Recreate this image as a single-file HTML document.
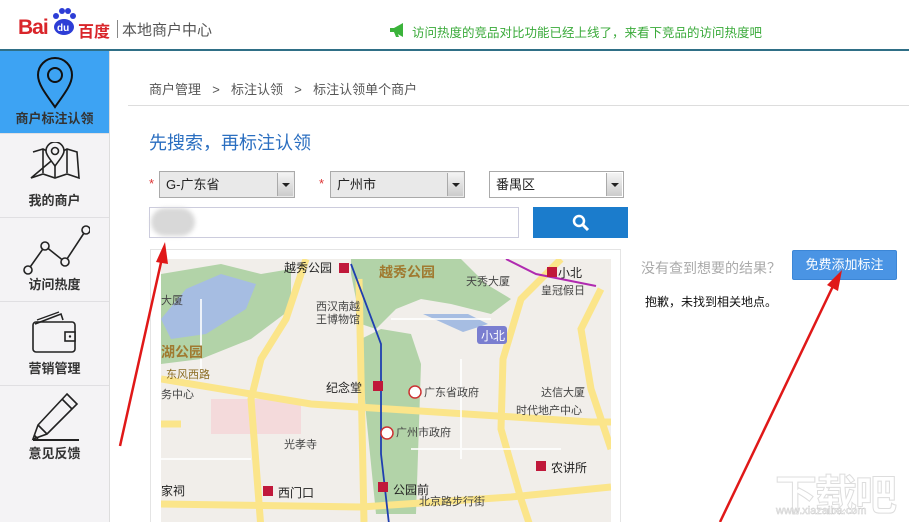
<!DOCTYPE html>
<html><head><meta charset="utf-8"><style>
*{margin:0;padding:0;box-sizing:border-box}
html,body{width:909px;height:522px;overflow:hidden}
body{background:#fff;font-family:"Liberation Sans","Noto Sans CJK SC",sans-serif;position:relative}
.abs{position:absolute}
.side{left:0;top:51px;width:110px;height:471px;background:#f4f3f5;border-right:1px solid #ddd}
.item{position:absolute;left:0;width:109px;height:84px;border-bottom:1px solid #e0dfe2;text-align:center;font-size:13px;font-weight:bold;color:#333}
.item span{position:absolute;left:0;right:0;bottom:8px}
.sel{background:#e9e9e9;border:1px solid #aaa;height:27px;font-size:13px;color:#222;line-height:25px;padding-left:6px}
.sel i{position:absolute;right:1px;top:1px;width:16px;height:23px;background:linear-gradient(#f4f4f4,#ccc);border-left:1px solid #aaa}
.sel i:after{content:"";position:absolute;left:4px;top:10px;border:4px solid transparent;border-top:4px solid #222}
.star{color:#d33;font-size:13px}
</style></head><body>
<!-- header -->
<div class="abs" style="left:18px;top:16px;font-size:21px;font-weight:bold;color:#d9252a;letter-spacing:-1px">Bai</div>
<div class="abs" style="left:52px;top:8px;width:24px;height:30px">
<svg width="24" height="30"><g fill="#2d3dd6"><circle cx="4" cy="8" r="3"/><circle cx="10" cy="3" r="3"/><circle cx="16" cy="3" r="3"/><circle cx="21" cy="8" r="3"/><ellipse cx="12" cy="19" rx="10" ry="8"/></g><text x="5" y="23" fill="#fff" font-size="10" font-weight="bold" font-family="Liberation Sans">du</text></svg></div>
<div class="abs" style="left:78px;top:18px;font-size:16px;font-weight:bold;color:#d9252a">百度</div>
<div class="abs" style="left:117px;top:20px;width:1px;height:18px;background:#888"></div>
<div class="abs" style="left:122px;top:19px;font-size:15px;color:#555">本地商户中心</div>
<svg class="abs" style="left:389px;top:22px" width="18" height="16"><path d="M1 6h4l9-5v14l-9-5H1z" fill="#3bb33b"/><path d="M5 10l2 5h3l-2-5z" fill="#3bb33b"/></svg>
<div class="abs" style="left:412px;top:22px;font-size:12.5px;color:#3aaa3a">访问热度的竞品对比功能已经上线了，来看下竞品的访问热度吧</div>
<div class="abs" style="left:0;top:49px;width:909px;height:2px;background:#2f6f86"></div>
<!-- sidebar -->
<div class="abs side">
<div class="item" style="top:0;height:83px;background:#3da3f3;color:#333"><svg style="margin-top:6px" width="40" height="52" viewBox="0 0 40 52"><path d="M20 50C10 36 3 27 3 18a17 17 0 0 1 34 0c0 9-7 18-17 32z" fill="none" stroke="#111" stroke-width="2"/><circle cx="20" cy="18" r="7" fill="none" stroke="#111" stroke-width="2"/></svg><span style="bottom:6px">商户标注认领</span></div>
<div class="item" style="top:83px"><svg style="margin-top:8px" width="52" height="40" viewBox="0 0 52 40"><path d="M4 10l10-3 4 2M34 9l4-2 10 3 2 26-12-4-12 4-12-4-12 4z" fill="none" stroke="#222" stroke-width="1.6"/><path d="M14 7v24M38 7v24M26 22v13" stroke="#222" stroke-width="1.6"/><path d="M26 24C20 16 17 12 17 9a9 9 0 0 1 18 0c0 3-3 7-9 15z" fill="#f4f3f5" stroke="#222" stroke-width="1.6"/><circle cx="26" cy="9" r="3.5" fill="none" stroke="#222" stroke-width="1.6"/></svg><span>我的商户</span></div>
<div class="item" style="top:167px"><svg style="margin-top:4px" width="70" height="56" viewBox="0 0 70 56"><polyline points="8,48 25,24 45,40 66,8" fill="none" stroke="#222" stroke-width="1.6"/><g fill="#f4f3f5" stroke="#222" stroke-width="1.6"><circle cx="8" cy="48" r="4"/><circle cx="25" cy="24" r="4"/><circle cx="45" cy="40" r="4"/><circle cx="66" cy="8" r="4"/></g></svg><span>访问热度</span></div>
<div class="item" style="top:251px"><svg style="margin-top:8px" width="52" height="44" viewBox="0 0 52 44"><path d="M6 14l26-10 2 6" fill="none" stroke="#222" stroke-width="1.6"/><path d="M8 10l22-8" stroke="#222" stroke-width="1.2"/><rect x="4" y="12" width="42" height="30" rx="3" fill="none" stroke="#222" stroke-width="1.6"/><rect x="36" y="22" width="10" height="9" fill="#f4f3f5" stroke="#222" stroke-width="1.6"/><circle cx="41" cy="26.5" r="1.2" fill="#222"/></svg><span>营销管理</span></div>
<div class="item" style="top:335px;border:none"><svg style="margin-top:4px" width="60" height="52" viewBox="0 0 60 52"><path d="M42 4l10 10-30 30-14 5 5-14z" fill="none" stroke="#222" stroke-width="1.6"/><path d="M37 9l10 10M13 35l9 9M9 45l4 4" stroke="#222" stroke-width="1.6"/><path d="M8 50h46" stroke="#222" stroke-width="2"/></svg><span>意见反馈</span></div>
</div>
<!-- content -->
<div class="abs" style="left:149px;top:79px;font-size:13px;color:#555;word-spacing:2px">商户管理 &nbsp;&gt;&nbsp; 标注认领 &nbsp;&gt;&nbsp; 标注认领单个商户</div>
<div class="abs" style="left:128px;top:105px;width:781px;height:1px;background:#ddd"></div>
<div class="abs" style="left:149px;top:129px;font-size:18px;color:#2a6ec0">先搜索，再标注认领</div>
<div class="abs star" style="left:149px;top:176px">*</div>
<div class="abs sel" style="left:159px;top:171px;width:136px">G-广东省<i></i></div>
<div class="abs star" style="left:319px;top:176px">*</div>
<div class="abs sel" style="left:330px;top:171px;width:135px">广州市<i></i></div>
<div class="abs sel" style="left:489px;top:171px;width:135px;background:#fff">番禺区<i></i></div>
<div class="abs" style="left:149px;top:207px;width:370px;height:31px;border:1px solid #ccd;background:#fff"></div>
<div class="abs" style="left:151px;top:208px;width:44px;height:28px;background:#d8d8d8;border-radius:14px;filter:blur(2px)"></div>
<div class="abs" style="left:533px;top:207px;width:95px;height:31px;background:#1b7ccc"><svg style="position:absolute;left:39px;top:7px" width="18" height="18"><circle cx="7" cy="7" r="5" fill="none" stroke="#fff" stroke-width="2.5"/><path d="M11 11l5 5" stroke="#fff" stroke-width="3"/></svg></div>
<!-- map frame -->
<div class="abs" style="left:150px;top:249px;width:471px;height:273px;border:1px solid #e4e4e4;border-bottom:none"></div>
<svg class="abs" style="left:161px;top:259px" width="450" height="263" viewBox="0 0 450 263" font-family="Liberation Sans,Noto Sans CJK SC,sans-serif">
<rect width="450" height="263" fill="#f1eeea"/>
<path d="M190 0h110l25 25 25 15-20 15-40-10-30-5-25 10-20 20-15-5-10-50z" fill="#b2d3a8"/>
<path d="M200 80l20 -10 30 5 10 30 -5 150 -40 0 -10 -100z" fill="#b2d3a8"/>
<path d="M0 15l60-10 40 10 30-5 0 40-40 30-50 20-40 5z" fill="#b2d3a8"/>
<path d="M25 30l35-15 35 10-10 25-40 25-35 5-10-20z" fill="#a6bde2"/>
<path d="M262 55l45 0 20 10-25 8z" fill="#a6bde2"/>
<rect x="50" y="140" width="90" height="35" fill="#f4dadb"/>
<g fill="none" stroke="#fbe58a" stroke-width="7">
<path d="M0 120l150 25 280 18h20"/>
<path d="M0 165l20 0"/>
<path d="M0 245l200 3 150-10 100-10"/>
<path d="M145 0l-20 60-25 40-10 40 10 130"/>
<path d="M198 20l5 243"/>
<path d="M400 0l-40 40-18 60-2 70 20 70 10 30"/>
<path d="M440 30l-20 40 10 60 20 60"/>
</g>
<g fill="none" stroke="#fff" stroke-width="2" opacity=".8"><path d="M0 200h90M230 60h100M250 190h150M300 100v100M40 40v80"/></g>
<path d="M190 5l30 80 0 110 8 70" stroke="#1f3fb0" stroke-width="1.8" fill="none"/>
<path d="M345 0l30 15 60 12" stroke="#b02ab0" stroke-width="2" fill="none"/>
<g fill="#c0183a"><rect x="178" y="4" width="10" height="10"/><rect x="386" y="8" width="10" height="10"/><rect x="212" y="122" width="10" height="10"/><rect x="375" y="202" width="10" height="10"/><rect x="102" y="227" width="10" height="10"/><rect x="217" y="223" width="10" height="10"/></g>
<g font-size="12" fill="#222">
<text x="123" y="13">越秀公园</text><text x="397" y="18">小北</text><text x="165" y="133">纪念堂</text><text x="390" y="213">农讲所</text><text x="0" y="236">家祠</text><text x="117" y="238">西门口</text><text x="232" y="235">公园前</text>
</g>
<g font-size="11" fill="#444"><text x="155" y="51">西汉南越</text><text x="155" y="64">王博物馆</text><text x="305" y="26">天秀大厦</text><text x="380" y="35">皇冠假日</text><text x="0" y="45">大厦</text><text x="263" y="137">广东省政府</text><text x="380" y="137">达信大厦</text><text x="355" y="155">时代地产中心</text><text x="235" y="177">广州市政府</text><text x="123" y="189">光孝寺</text><text x="0" y="139">务中心</text><text x="258" y="246">北京路步行街</text><text x="5" y="119" fill="#8a6b20">东风西路</text></g>
<g font-size="14" font-weight="bold" fill="#a07a30"><text x="218" y="18">越秀公园</text><text x="0" y="98">湖公园</text></g>
<rect x="316" y="67" width="30" height="18" rx="3" fill="#7a7ed0"/><text x="320" y="81" font-size="12" fill="#fff">小北</text>
<g fill="#fff" stroke="#c33" stroke-width="1.5"><circle cx="254" cy="133" r="6"/><circle cx="226" cy="174" r="6"/></g>
</svg>
<div class="abs" style="left:641px;top:258px;font-size:14px;color:#aaa">没有查到想要的结果？</div>
<div class="abs" style="left:792px;top:250px;width:105px;height:30px;background:#4a94e4;border:1px solid #3c86d6;border-radius:2px;color:#fff;font-size:13px;text-align:center;line-height:28px">免费添加标注</div>
<div class="abs" style="left:645px;top:293px;font-size:12px;color:#111">抱歉，未找到相关地点。</div>
<!-- watermark -->
<div class="abs" style="left:775px;top:462px;font-size:42px;font-weight:bold;color:#fff;-webkit-text-stroke:1px #ddd;letter-spacing:-2px">下载吧</div>
<div class="abs" style="left:776px;top:505px;font-size:11px;color:#fff;-webkit-text-stroke:0.5px #ccc">www.xiazaiba.com</div>
<!-- arrows -->
<svg class="abs" style="left:0;top:0" width="909" height="522">
<g stroke="#e01818" stroke-width="2.5" fill="#e01818">
<line x1="120" y1="446" x2="162" y2="258"/><polygon points="165,242 156,262 168,264" stroke="none"/>
<line x1="720" y1="522" x2="834" y2="284"/><polygon points="842,270 827,285 838,291" stroke="none"/>
</g></svg>
</body></html>
